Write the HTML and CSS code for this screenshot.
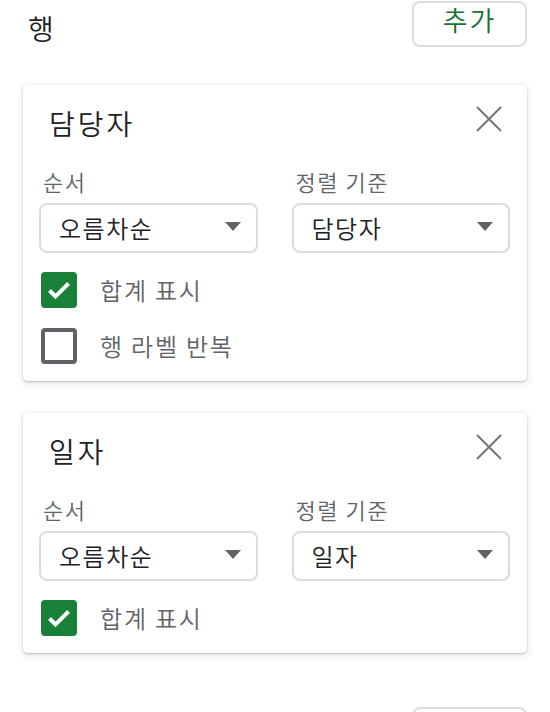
FILE: index.html
```html
<html>
<head>
    <meta charset="utf-8">
    <link rel="stylesheet" href="styles.css">
</head>
<body>
    <div class="section">
        <div class="section__header">
            <div class="section__title">행</div>
            <button class="section__add">추가</button>
        </div>

        <div class="card">
            <div class="card__head">
                <div class="card__title">담당자</div>
                <svg class="card__close" width="26" height="26" viewBox="0 0 26 26">
                    <path d="M1 1L25 25M25 1L1 25" stroke="#757575" stroke-width="2" fill="none"/>
                </svg>
            </div>
            <div class="card__fields">
                <div class="field">
                    <div class="field__label">순서</div>
                    <div class="select">
                        <span class="select__value">오름차순</span>
                        <svg class="select__caret" width="16" height="9" viewBox="0 0 16 9"><path d="M0 0H16L8 9Z" fill="#5f6368"/></svg>
                    </div>
                </div>
                <div class="field">
                    <div class="field__label">정렬 기준</div>
                    <div class="select">
                        <span class="select__value">담당자</span>
                        <svg class="select__caret" width="16" height="9" viewBox="0 0 16 9"><path d="M0 0H16L8 9Z" fill="#5f6368"/></svg>
                    </div>
                </div>
            </div>
            <label class="check">
                <span class="check__box check__box--on">
                    <svg width="36" height="36" viewBox="0 0 36 36"><path d="M8.5 18.5L14.5 24.5L27.5 11.5" stroke="#fff" stroke-width="4" fill="none"/></svg>
                </span>
                <span class="check__label">합계 표시</span>
            </label>
            <label class="check">
                <span class="check__box"></span>
                <span class="check__label">행 라벨 반복</span>
            </label>
        </div>

        <div class="card">
            <div class="card__head">
                <div class="card__title">일자</div>
                <svg class="card__close" width="26" height="26" viewBox="0 0 26 26">
                    <path d="M1 1L25 25M25 1L1 25" stroke="#757575" stroke-width="2" fill="none"/>
                </svg>
            </div>
            <div class="card__fields">
                <div class="field">
                    <div class="field__label">순서</div>
                    <div class="select">
                        <span class="select__value">오름차순</span>
                        <svg class="select__caret" width="16" height="9" viewBox="0 0 16 9"><path d="M0 0H16L8 9Z" fill="#5f6368"/></svg>
                    </div>
                </div>
                <div class="field">
                    <div class="field__label">정렬 기준</div>
                    <div class="select">
                        <span class="select__value">일자</span>
                        <svg class="select__caret" width="16" height="9" viewBox="0 0 16 9"><path d="M0 0H16L8 9Z" fill="#5f6368"/></svg>
                    </div>
                </div>
            </div>
            <label class="check">
                <span class="check__box check__box--on">
                    <svg width="36" height="36" viewBox="0 0 36 36"><path d="M8.5 18.5L14.5 24.5L27.5 11.5" stroke="#fff" stroke-width="4" fill="none"/></svg>
                </span>
                <span class="check__label">합계 표시</span>
            </label>
        </div>
    </div>

    <div class="section section--next">
        <div class="section__header">
            <div class="section__title">열</div>
            <button class="section__add">추가</button>
        </div>
    </div>
</body>
</html>
```

FILE: styles.css
```css
body {
    margin: 0;
    padding: 0 23px;
    font-family: "Noto Sans CJK KR", "Noto Sans", sans-serif;
    font-weight: 350;
    color: #202124;
    background: #fff;
}

.section--next {
    margin-top: 53px;
}

.section__header {
    display: flex;
    justify-content: space-between;
    align-items: flex-start;
    padding-top: 1px;
}

.section__title {
    font-size: 28px;
    line-height: 36px;
    padding: 9px 0 0 5px;
}

.section__add {
    box-sizing: border-box;
    width: 115px;
    height: 46px;
    padding: 0;
    border: 2px solid #dadce0;
    border-radius: 8px;
    background: #fff;
    color: #137333;
    font-family: inherit;
    font-weight: 350;
    font-size: 27px;
    line-height: 34px;
    letter-spacing: 2px;
    display: flex;
    justify-content: center;
    align-items: flex-start;
}

.card {
    margin-top: 38px;
    padding: 0 17px 17px 16px;
    background: #fff;
    border-radius: 5px;
    box-shadow: 0 1px 2px rgba(60, 64, 67, .25), 0 2px 6px 1px rgba(60, 64, 67, .12);
}

.card + .card {
    margin-top: 32px;
}

.card__head {
    display: flex;
    justify-content: space-between;
    align-items: flex-start;
    padding-top: 20px;
}

.card__title {
    font-size: 28px;
    line-height: 36px;
    letter-spacing: 3px;
    padding-left: 10px;
}

.card__close {
    margin: 1px 8px 0 0;
}

.card__fields {
    display: grid;
    grid-template-columns: 1fr 1fr;
    column-gap: 34px;
    margin-top: 26px;
}

.field__label {
    font-size: 22px;
    line-height: 28px;
    letter-spacing: 1.5px;
    color: #5f6368;
    padding-left: 4px;
}

.select {
    box-sizing: border-box;
    height: 50px;
    margin-top: 8px;
    border: 2px solid #dadce0;
    border-radius: 8px;
    display: flex;
    align-items: center;
    justify-content: space-between;
    padding: 0 15px 0 18px;
}

.select__value {
    font-size: 24px;
    line-height: 32px;
    letter-spacing: 1.5px;
    color: #202124;
}

.select__caret {
    margin-top: -3px;
}

.check {
    display: flex;
    align-items: center;
    gap: 23px;
    margin-top: 20px;
    padding-left: 2px;
}

.card__fields + .check {
    margin-top: 19px;
}

.check__box {
    box-sizing: border-box;
    width: 36px;
    height: 36px;
    border: 4px solid #5f6368;
    border-radius: 4px;
    display: block;
}

.check__box--on {
    border: none;
    background: #188038;
}

.check__box svg {
    display: block;
}

.check__label {
    font-size: 24px;
    line-height: 36px;
    letter-spacing: 1.8px;
    color: #5f6368;
}
```
